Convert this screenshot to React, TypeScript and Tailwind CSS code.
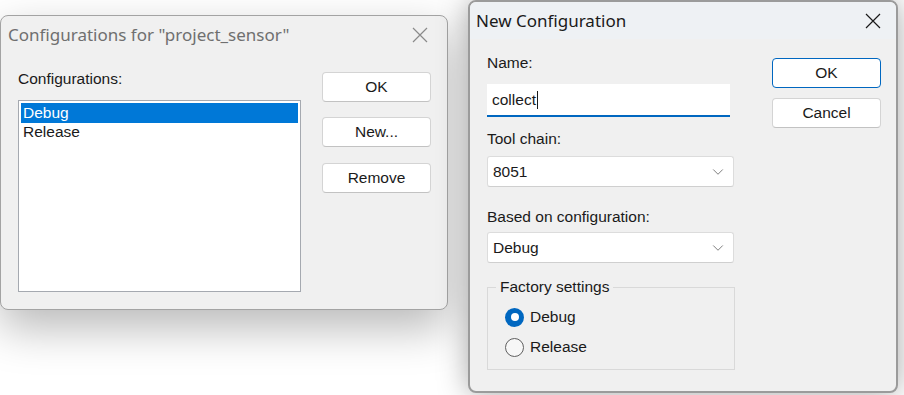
import { ChevronDown } from "lucide-react";

const dlgFont = { fontFamily: '"Liberation Sans", Arial, sans-serif' };
const titleFont = { fontFamily: '"Noto Sans", "Open Sans", sans-serif' };

function CloseGlyph({ color }: { color: string }) {
  return (
    <svg width="16" height="16" viewBox="0 0 16 16" fill="none">
      <path d="M1 1L15 15M15 1L1 15" stroke={color} strokeWidth="1.2" />
    </svg>
  );
}

function Button({ label, focused = false }: { label: string; focused?: boolean }) {
  return (
    <div
      className={
        focused
          ? "h-[30px] w-[109px] rounded-[4px] border border-[#0067c0] bg-white flex items-center justify-center text-[15.5px] text-[#1a1a1a]"
          : "h-[30px] w-[109px] rounded-[4px] border border-[#d4d4d4] border-b-[#c2c2c2] bg-white flex items-center justify-center text-[15.5px] text-[#1a1a1a]"
      }
    >
      {label}
    </div>
  );
}

function Select({ value }: { value: string }) {
  return (
    <div className="h-[31px] w-[247px] rounded-[3px] border border-[#dcdcdc] border-b-[#cfcfcf] bg-white flex items-center justify-between pl-[5px] pr-[6px] text-[15.5px] text-[#1a1a1a]">
      <span>{value}</span>
      <ChevronDown className="h-[18px] w-[18px] text-[#707070]" strokeWidth={1.2} />
    </div>
  );
}

function Radio({ label, checked }: { label: string; checked: boolean }) {
  return (
    <div className="flex items-center gap-[6px] h-[20px]">
      {checked ? (
        <span className="h-[19px] w-[19px] rounded-full bg-[#0067c0] flex items-center justify-center">
          <span className="h-[8px] w-[8px] rounded-full bg-white" />
        </span>
      ) : (
        <span className="h-[19px] w-[19px] rounded-full border border-[#5f5f5f] bg-[#f7f7f7]" />
      )}
      <span className="text-[15.5px] text-[#1a1a1a]">{label}</span>
    </div>
  );
}

export default function App() {
  return (
    <div className="relative w-[904px] h-[395px] overflow-hidden bg-white" style={dlgFont}>
      {/* Configurations dialog (inactive) */}
      <div className="absolute left-0 top-[15px] w-[448px] h-[295px] rounded-[8px] border border-[#a3a3a3] bg-[#f0f0f0] shadow-[0_18px_45px_rgba(0,0,0,0.28)] flex flex-col">
        <div className="h-[38px] flex items-center justify-between pl-[7px] pr-[19px]">
          <span className="text-[17px] text-[#6f6f6f]" style={titleFont}>
            Configurations for "project_sensor"
          </span>
          <CloseGlyph color="#8a8a8a" />
        </div>
        <div className="flex pl-[17px] gap-[21px]">
          <div className="flex flex-col">
            <div className="mt-[17px] h-[16px] leading-[16px] text-[15.5px] text-[#1a1a1a]">Configurations:</div>
            <div className="mt-[13px] w-[283px] h-[192px] border border-[#a5a9b0] bg-white p-[2px] text-[15.5px] leading-[18px]">
              <div className="h-[20px] bg-[#0078d7] text-white pl-[2px] flex items-center">Debug</div>
              <div className="h-[18px] text-[#1a1a1a] pl-[2px] flex items-center">Release</div>
            </div>
          </div>
          <div className="flex flex-col mt-[18px] gap-[15px]">
            <Button label="OK" />
            <Button label="New..." />
            <div className="mt-[1px]">
              <Button label="Remove" />
            </div>
          </div>
        </div>
      </div>

      {/* New Configuration dialog (active) */}
      <div className="absolute left-[468px] top-0 w-[430px] h-[393px] rounded-[8px] border-2 border-[#9b9b9b] bg-[#f0f0f0] overflow-hidden shadow-[0_0_30px_rgba(0,0,0,0.35)] flex flex-col">
        <div className="h-[37px] bg-[#eef1f4] flex items-center justify-between pl-[6px] pr-[15px]">
          <span className="text-[17px] text-[#1a1a1a]" style={titleFont}>
            New Configuration
          </span>
          <CloseGlyph color="#1a1a1a" />
        </div>
        <div className="flex pl-[17px]">
          <div className="flex flex-col w-[247px]">
            <div className="mt-[16px] h-[16px] leading-[16px] text-[15.5px] text-[#1a1a1a]">Name:</div>
            <div className="mt-[13px] h-[33px] w-[243px] bg-white border-b-2 border-[#0067c0] flex items-center pl-[5px] text-[15.5px] text-[#1a1a1a]">
              <span>collect</span>
              <span className="ml-[1px] h-[18px] border-l border-[#1a1a1a]" />
            </div>
            <div className="mt-[14px] h-[16px] leading-[16px] text-[15.5px] text-[#1a1a1a]">Tool chain:</div>
            <div className="mt-[9px]">
              <Select value="8051" />
            </div>
            <div className="mt-[22px] h-[16px] leading-[16px] text-[15.5px] text-[#1a1a1a]">Based on configuration:</div>
            <div className="mt-[7px]">
              <Select value="Debug" />
            </div>
            <div className="relative mt-[24px] h-[83px] w-[248px] border border-[#d9d9d9] pl-[17px] pt-[19px] flex flex-col gap-[10px]">
              <span className="absolute left-[8px] top-[-10px] bg-[#f0f0f0] px-[4px] text-[15.5px] leading-[18px] text-[#1a1a1a]">
                Factory settings
              </span>
              <Radio label="Debug" checked />
              <Radio label="Release" checked={false} />
            </div>
          </div>
          <div className="flex flex-col ml-[38px] mt-[19px] gap-[10px]">
            <Button label="OK" focused />
            <Button label="Cancel" />
          </div>
        </div>
      </div>
    </div>
  );
}
